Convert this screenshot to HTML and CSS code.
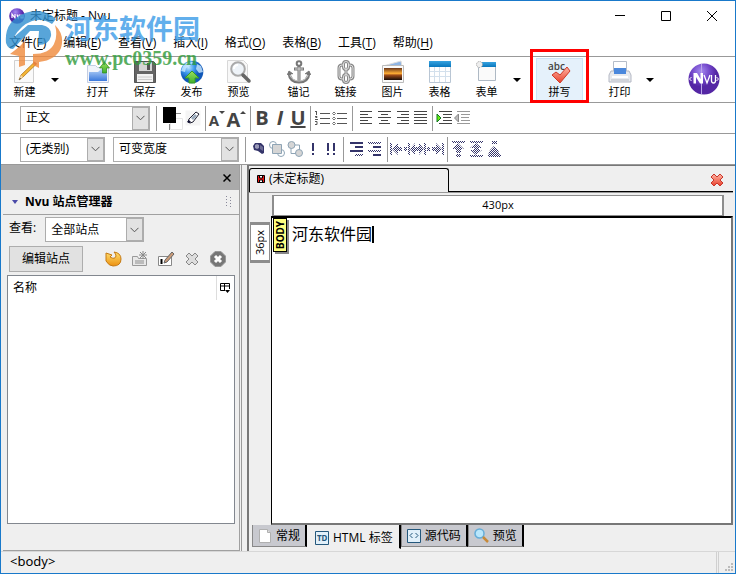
FILE: index.html
```html
<!DOCTYPE html>
<html lang="zh-CN">
<head>
<meta charset="utf-8">
<title>未定标题 - Nvu</title>
<link rel="stylesheet" href="styles.css">
</head>
<body>
<svg class="defs" width="0" height="0" aria-hidden="true">
  <defs>
    <pattern id="dots" width="2" height="2" patternUnits="userSpaceOnUse"><path fill="#34346a" d="M0 0h1v1H0zM1 1h1v1H1z"/></pattern>
    <linearGradient id="blue" x2="0" y2="1"><stop stop-color="#b8d4f8"/><stop offset="1" stop-color="#3a78dc"/></linearGradient>
    <linearGradient id="bar" x2="0" y2="1"><stop stop-color="#38a3e0"/><stop offset="1" stop-color="#0877bd"/></linearGradient>
    <linearGradient id="green" x2="0" y2="1"><stop stop-color="#9be05e"/><stop offset="1" stop-color="#3fb02c"/></linearGradient>
    <linearGradient id="sunset" x2="0" y2="1"><stop stop-color="#6a3518"/><stop offset=".45" stop-color="#ffae35"/><stop offset=".6" stop-color="#9c4a18"/><stop offset="1" stop-color="#180c08"/></linearGradient>
    <linearGradient id="red" x2="0" y2="1"><stop stop-color="#ffb5a5"/><stop offset="1" stop-color="#e8402c"/></linearGradient>
    <linearGradient id="gold" x2="0" y2="1"><stop stop-color="#ffe070"/><stop offset="1" stop-color="#ec9010"/></linearGradient>
    <radialGradient id="globe" cx=".35" cy=".3"><stop stop-color="#bde4ff"/><stop offset=".5" stop-color="#3f9bee"/><stop offset="1" stop-color="#1058b8"/></radialGradient>
    <radialGradient id="violet" cx=".4" cy=".25"><stop stop-color="#a58af0"/><stop offset=".6" stop-color="#7044c8"/><stop offset="1" stop-color="#5426a4"/></radialGradient>
    <symbol id="chev" viewBox="0 0 9 6"><path d="M.5.8l4 4 4-4" fill="none" stroke="#555"/></symbol>
  </defs>
</svg>

<div class="window">
  <header class="titlebar">
    <svg class="app-icon" viewBox="0 0 16 16"><circle cx="8" cy="8" r="7.8" fill="url(#violet)"/><path d="M3 10V6l3 4V6M8 6.500l1.200 3.500 1.300-3.500M12 6.500V10h2V6.500" fill="none" stroke="#fff" stroke-width="1.200"/></svg>
    <span class="caption">未定标题 - Nvu</span>
    <div class="win-buttons">
      <button aria-label="最小化"><svg width="10" height="10"><path d="M0 4.500h10" stroke="#000"/></svg></button>
      <button aria-label="最大化"><svg width="10" height="10"><path d="M.5.5h9v9h-9z" fill="none" stroke="#000"/></svg></button>
      <button aria-label="关闭"><svg width="10" height="10"><path d="M0 0l10 10M10 0L0 10" stroke="#000"/></svg></button>
    </div>
  </header>

  <nav class="menubar">
    <button>文件(<u>F</u>)</button>
    <button>编辑(<u>E</u>)</button>
    <button>查看(<u>V</u>)</button>
    <button>插入(<u>I</u>)</button>
    <button>格式(<u>O</u>)</button>
    <button>表格(<u>B</u>)</button>
    <button>工具(<u>T</u>)</button>
    <button>帮助(<u>H</u>)</button>
  </nav>

  <div class="toolbar">
    <button class="tool"><svg viewBox="0 0 24 24"><path d="M1.500.5h19v22h-19z" fill="#fafafa" stroke="#d0d0d0"/><path d="M21.500 2l2 2L10 17l-4 3 2-5z" fill="#f4b536" stroke="#a66b12" stroke-width=".7"/><path d="M6 20l2-5 2 2z" fill="#f1d8ae"/><path d="M6 20l1-2 1 .8z" fill="#222"/><path d="M20.500 3l2 2 1.200-1-2-2z" fill="#b55"/></svg>新建</button>
    <button class="drop" aria-label="新建选项"><i class="tri"></i></button>
    <button class="tool gap"><svg viewBox="0 0 24 24"><path d="M1.500 5.500h8l2 2h11v15h-21z" fill="#f1f4fb" stroke="#c3cde2"/><path d="M3 12h9l3-3h6v12H3z" fill="url(#blue)"/><path d="M18.500 2l5 6h-3v5h-4V8h-3z" fill="url(#green)" stroke="#2b8a1b" stroke-width=".7"/></svg>打开</button>
    <button class="tool"><svg viewBox="0 0 24 24"><path d="M1.500 1.500h19l2 2v19h-21z" fill="#656565" stroke="#555"/><path d="M6 2h13v9H6z" fill="#d5d5d5"/><path d="M14 3h3v7h-3z" fill="#555"/><path d="M4 14h16v8H4z" fill="#f3f3f3"/><path d="M5 17h14M5 19.500h14" stroke="#ccc"/></svg>保存</button>
    <button class="tool"><svg viewBox="0 0 24 24"><circle cx="12" cy="12" r="11.300" fill="url(#globe)"/><path d="M3 6q5-6 10-4l-3 4-4 2-1 4-4-1zM17 4l4 2 2 6-4 1-3-4z" fill="#cceaff" opacity=".8"/><path d="M12 11l7 7h-4v5H9v-5H5z" fill="url(#green)" stroke="#379a2a"/></svg>发布</button>
    <button class="tool"><svg viewBox="0 0 24 24"><path d="M.5.500h16l4 4v18H.5z" fill="#f8f8f8" stroke="#d8d8d8"/><circle cx="11" cy="9" r="6.800" fill="#eef3f8" stroke="#aaa" stroke-width="2"/><path d="M16 15l6 6" stroke="#666" stroke-width="3.500" stroke-linecap="round"/><path d="M7 9q0-4 4-4" fill="none" stroke="#fff" stroke-width="2"/></svg>预览</button>
    <button class="tool gap"><svg viewBox="0 0 24 24" fill="none" stroke="#777"><circle cx="12" cy="3.500" r="2.300" stroke-width="2"/><path d="M12 6v15M7 9h10" stroke-width="3"/><path d="M2 13q1 9 10 9t10-9" stroke-width="3"/><path d="M.5 15L2 11l4 3M23.500 15L22 11l-4 3" fill="#777"/><path d="M12 7v13M8 9h8M3 15q2 6 9 6t9-6" stroke="#d2d2d2"/></svg>锚记</button>
    <button class="tool"><svg viewBox="0 0 24 24" fill="none"><g stroke="#888" stroke-width="3"><path d="M9 19H8q-3 0-3-3V8q0-3 3-3h1M15 19h1q3 0 3-3V8q0-3-3-3h-1"/><rect x="9.500" y="1.500" width="5" height="8" rx="2.500"/><rect x="9.500" y="14.500" width="5" height="8" rx="2.500"/><path d="M12 8v8"/></g><g stroke="#ddd"><path d="M9 19H8q-3 0-3-3V8q0-3 3-3h1M15 19h1q3 0 3-3V8q0-3-3-3h-1"/><rect x="9.500" y="1.500" width="5" height="8" rx="2.500"/><rect x="9.500" y="14.500" width="5" height="8" rx="2.500"/><path d="M12 8v8"/></g></svg>链接</button>
    <button class="tool"><svg viewBox="0 0 24 24"><path d="M2 6l18-5 1 6H2z" fill="#8db4e4" stroke="#ddd"/><path d="M1.500 5.500h21v17h-21z" fill="#fafafa" stroke="#bbb"/><path d="M3 8h18v12H3z" fill="url(#sunset)"/></svg>图片</button>
    <button class="tool"><svg viewBox="0 0 24 24"><path d="M1.500 1.500h21v21h-21z" fill="#fff" stroke="#b9c6d4"/><path d="M1 1h22v6H1z" fill="url(#bar)"/><path d="M6.500 7v15M11.500 7v15M17.500 7v15M2 11.500h20M2 16.500h20" stroke="#d3e0ec"/></svg>表格</button>
    <button class="tool"><svg viewBox="0 0 24 24"><path d="M3.500 2.500h17v18h-17z" fill="#fafafa" stroke="#aeb9c4"/><path d="M3 2h18v5H3z" fill="url(#bar)"/><circle cx="4.500" cy="4.500" r="3" fill="#eee" stroke="#999" stroke-dasharray="1 1"/></svg>表单</button>
    <button class="drop" aria-label="表单选项"><i class="tri"></i></button>
    <div class="marked gap"><button class="tool hot"><svg viewBox="0 0 24 24"><text x="0" y="10" class="abc">abc</text><path d="M4 15l4-3 4 3 7-8 3 4-10 12z" fill="url(#red)" stroke="#cf3a28"/></svg>拼写</button></div>
    <button class="tool gap"><svg viewBox="0 0 24 24"><path d="M5.500 1.500h13v11h-13z" fill="#fff" stroke="#b5bdc9"/><path d="M3 11h18l2 4v7H1v-7z" fill="#e8eaee" stroke="#b4b8c4"/><path d="M6 8h12v6H6z" fill="#4b88dc"/><path d="M4 16h16v2H4z" fill="#fff"/><path d="M3 20h18" stroke="#b8bcc4"/></svg>打印</button>
    <button class="drop" aria-label="打印选项"><i class="tri"></i></button>
    <svg class="nvu-logo" viewBox="0 0 32 32"><circle cx="16" cy="16" r="15.500" fill="url(#violet)"/><path d="M13.500 1v30" stroke="#b9a3ea"/><path d="M3.500 14l-2 2 2 2M28.500 14l2 2-2 2" fill="none" stroke="#fff"/><path d="M5.500 20.500V10h3.500l3.500 6V10H15v10.500h-3l-4-6.500v6.500z" fill="#fff"/><path d="M16 12l3 8 3-8M23.500 12v5.500q0 2.500 2 2.500t2-2.500V12" fill="none" stroke="#fff" stroke-width="1.300"/></svg>
  </div>

  <div class="formatbar">
    <label class="combo para"><select aria-label="段落格式"><option>正文</option></select><span class="arrow"><svg><use href="#chev"/></svg></span></label>
    <div class="group">
      <button class="swatches" aria-label="文字和背景颜色"><svg width="22" height="24"><path d="M9.500 12.500h12v11h-12z" fill="#fff" stroke="#e6e6e6"/><path d="M15 7.500h5M8.500 18v6" stroke="#888"/><path d="M2 1h13v16H2z" fill="#000"/></svg></button>
      <button aria-label="高亮"><svg width="16" height="16"><path d="M.5.5h15v15H.5z" fill="#f5f5f5"/><path d="M3 12l1-3 7-7 3 2-6 8-3 1z" fill="#fff" stroke="#223"/><path d="M6 8l4-4 2 2-4 4z" fill="#9ab"/><path d="M2 12l2-2 2 2-2 1z" fill="#113"/></svg></button>
    </div>
    <div class="group">
      <button class="a-small" aria-label="缩小字号">A<i class="tri"></i></button>
      <button class="a-big" aria-label="放大字号">A<i class="tri up"></i></button>
    </div>
    <div class="group letters"><button><b>B</b></button><button><b><em>I</em></b></button><button><b class="under">U</b></button></div>
    <div class="group">
      <button aria-label="编号列表"><svg width="16" height="14"><path d="M2.500 0v4M1 .5h1M1 5.500h2v1H1.500M1 8.500h3M1 10.500h2v3H1" stroke="#555" fill="none"/><path d="M6 2.500h10M6 7.500h10M6 12.500h10" stroke="#555"/></svg></button>
      <button aria-label="项目列表"><svg width="16" height="14"><path d="M2 1l1.500 1.500L2 4 .5 2.500zM2 6l1.500 1.500L2 9 .5 7.500zM2 11l1.500 1.500L2 14 .5 12.500z" fill="none" stroke="#777"/><path d="M5 2.500h10M5 7.500h10M5 12.500h10" stroke="#555"/></svg></button>
    </div>
    <div class="group wide">
      <button aria-label="左对齐"><svg width="13" height="14"><path d="M0 .5h12M0 3.500h8M0 6.500h12M0 9.500h8M0 12.500h12" stroke="#444"/></svg></button>
      <button aria-label="居中"><svg width="13" height="14"><path d="M0 .5h13M3 3.500h7M0 6.500h13M3 9.500h7M1 12.500h11" stroke="#444"/></svg></button>
      <button aria-label="右对齐"><svg width="13" height="14"><path d="M1 .5h12M5 3.500h8M1 6.500h12M5 9.500h8M1 12.500h12" stroke="#444"/></svg></button>
      <button aria-label="两端对齐"><svg width="13" height="14"><path d="M0 .5h13M0 3.500h13M0 6.500h13M0 9.500h13M0 12.500h13" stroke="#444"/></svg></button>
    </div>
    <div class="group">
      <button aria-label="增加缩进"><svg width="16" height="14"><path d="M1 3l4 4-4 4z" fill="#6e1" stroke="#172"/><path d="M3 .5h13M7 3.500h9M7 6.500h8M7 9.500h9M3 12.500h13" stroke="#444"/></svg></button>
      <button aria-label="减少缩进"><svg width="16" height="14"><path d="M4.500 3l-4 4 4 4z" fill="#bbb" stroke="#888"/><path d="M3 .5h13M7 3.500h9M7 6.500h8M7 9.500h9M3 12.500h13" stroke="#999"/></svg></button>
    </div>
  </div>

  <div class="formatbar">
    <label class="combo cls"><select aria-label="类别"><option>(无类别)</option></select><span class="arrow"><svg><use href="#chev"/></svg></span></label>
    <label class="combo font"><select aria-label="字体"><option>可变宽度</option></select><span class="arrow"><svg><use href="#chev"/></svg></span></label>
    <div class="group wide">
      <button aria-label="层"><svg width="12" height="14"><path d="M2 1h6l3 3v7l-2 1-4-3-4-1-1-4z" fill="#34346a"/><path d="M2 3l2-1 2 1v3L4 7 2 6z" fill="#9a9ab8"/><path d="M7 3l3 2v4L7 7z" fill="#6c6c94"/></svg></button>
      <button aria-label="置前"><svg width="16" height="16"><circle cx="4" cy="4" r="3.500" fill="#fff" stroke="#8ea4b5"/><circle cx="12" cy="12" r="3.500" fill="#fff" stroke="#8ea4b5"/><path d="M3.500 3.500h9v9h-9z" fill="#d5d5d5" stroke="#8ea4b5"/></svg></button>
      <button aria-label="置后"><svg width="16" height="16"><path d="M4 4h8.500v8M4 4v8.500h8" fill="none" stroke="#8ea4b5"/><circle cx="4.500" cy="4" r="3.500" fill="#d5d5d5" stroke="#8ea4b5"/><circle cx="12" cy="12" r="3.500" fill="#d5d5d5" stroke="#8ea4b5"/></svg></button>
      <button aria-label="强调"><svg width="4" height="12"><path d="M1 0h2v8H1zM1 10h2v2H1z" fill="#34346a"/></svg></button>
      <button aria-label="着重强调"><svg width="10" height="12"><path d="M1 0h2v8H1zM1 10h2v2H1zM7 0h2v8H7zM7 10h2v2H7z" fill="#34346a"/></svg></button>
    </div>
    <div class="group wide">
      <button aria-label="术语"><svg width="14" height="14"><path d="M0 0h13v2H0zM5 4h8v2H5zM0 8h13v2H0z" fill="#34346a"/><path d="M5 12h8v2H5z" fill="url(#dots)"/></svg></button>
      <button aria-label="定义"><svg width="14" height="14"><path d="M5 4h8v2H5zM5 12h8v2H5z" fill="#34346a"/><path d="M0 0h13v2H0zM0 8h13v2H0z" fill="url(#dots)"/></svg></button>
    </div>
    <div class="group">
      <button aria-label="靠左"><svg width="18" height="12"><path d="M0 0h2v12H0zM2 6l6-6v4h4v4H8v4zM14 4h3v4h-3z" fill="url(#dots)"/></svg></button>
      <button aria-label="水平居中"><svg width="18" height="12"><path d="M0 0h2v12H0zM16 0h2v12h-2zM2 6l5-6v4h4V0l5 6-5 6V8H7v4z" fill="url(#dots)"/></svg></button>
      <button aria-label="靠右"><svg width="18" height="12"><path d="M16 0h2v12h-2zM16 6l-6-6v4H6v4h4v4zM1 4h3v4H1z" fill="url(#dots)"/></svg></button>
    </div>
    <div class="group">
      <button aria-label="靠上"><svg width="14" height="16"><path d="M0 0h13v2H0zM6 2l6 6H9v4H4V8H0zM4 13h5v3H4z" fill="url(#dots)"/></svg></button>
      <button aria-label="垂直居中"><svg width="14" height="16"><path d="M0 0h13v2H0zM0 14h13v2H0zM6 2l6 5H9v2h3l-6 5-6-5h4V7H0z" fill="url(#dots)"/></svg></button>
      <button aria-label="靠下"><svg width="14" height="16"><path d="M0 14h13v2H0zM6 5l4 4 2 5H0l2-5zM4 0h5v3H4z" fill="url(#dots)"/></svg></button>
    </div>
  </div>

  <main class="workspace">
    <aside class="sidebar">
      <div class="side-top"><button aria-label="关闭侧栏"><svg width="8" height="8"><path d="M.5.5l7 7M7.500.5l-7 7" stroke="#000" stroke-width="1.500"/></svg></button></div>
      <div class="side-panel">
        <div class="side-head"><svg width="8" height="5"><path d="M1 0h6L4 4z" fill="#4a4aa8"/></svg><h2>Nvu 站点管理器</h2><svg class="grip" width="5" height="12"><path d="M.5 0v12M4.500 1v11" stroke="#889" stroke-dasharray="1 2"/></svg></div>
        <div class="view-row"><label for="view">查看:</label><span class="combo sites"><select id="view"><option>全部站点</option></select><span class="arrow"><svg><use href="#chev"/></svg></span></span></div>
        <div class="site-tools">
          <button class="push">编辑站点</button>
          <button aria-label="刷新"><svg width="18" height="16"><path d="M1 2l6 2-2 2q5 3 6-1 0-2-2-4 7 1 7 7 0 7-8 7-4 0-7-5z" fill="url(#gold)" stroke="#c57a14"/></svg></button>
          <button aria-label="新建文件夹"><svg width="18" height="16"><path d="M1.500 5.500h5l1 2h8v7h-14z" fill="#e8e8e8" stroke="#999"/><path d="M4 9h9v4H4z" fill="#bbb"/><path d="M12 0v8M8 4h8M9 1l6 6M15 1L9 7" stroke="#888"/></svg></button>
          <button aria-label="重命名"><svg width="18" height="16"><path d="M1.500 5.500h13v9h-13z" fill="#fff" stroke="#888"/><path d="M4.500 8v5" stroke="#000" stroke-width="2"/><path d="M15 1l2 2-7 8-3 1 1-3z" fill="#c99a78" stroke="#666"/></svg></button>
          <button aria-label="删除"><svg width="14" height="14"><path d="M1 4l3-3 3 3 3-3 3 3-3 3 3 3-3 3-3-3-3 3-3-3 3-3z" fill="#ddd" stroke="#888"/></svg></button>
          <button aria-label="停止"><svg width="16" height="16"><path d="M5 .5h6L15.500 5v6L11 15.500H5L.5 11V5z" fill="#777" stroke="#999"/><path d="M5 5l6 6M11 5l-6 6" stroke="#fff" stroke-width="3"/></svg></button>
        </div>
        <div class="tree">
          <div class="tree-head"><span>名称</span><button aria-label="选择列"><svg width="11" height="10"><path d="M.5.5h9v7h-9zM.5 3h9M4.500 1v7" fill="none" stroke="#000"/><path d="M5 6h6v4H5z" fill="#fff"/><path d="M5 7h5L7.500 10z"/></svg></button></div>
        </div>
      </div>
    </aside>
    <div class="splitter"></div>
    <section class="editor">
      <div class="doc-tabs">
        <button class="doc-tab"><svg width="8" height="8"><path d="M.5.5h7v7h-7z" fill="#e11" stroke="#000"/><path d="M2.500 1v2h3V1M2.500 7V5h3v2" fill="#fff" stroke="#000"/></svg>(未定标题)</button>
        <button class="doc-close" aria-label="关闭标签页"><svg width="14" height="14"><path d="M1 4l3-3 3 3 3-3 3 3-3 3 3 3-3 3-3-3-3 3-3-3 3-3z" fill="url(#red)" stroke="#c8352a"/></svg></button>
      </div>
      <div class="edit-area">
        <div class="ruler-h"><span>430px</span></div>
        <div class="ruler-v"><span>36px</span></div>
        <div class="canvas"><span class="body-tag">BODY</span><p>河东软件园</p></div>
      </div>
      <div class="mode-tabs">
        <button><svg width="14" height="16"><path d="M1.500 1.500h8l3 3v10h-11z" fill="#fff" stroke="#b0b0b0"/><path d="M9.500 1.500v3h3" fill="#ddd" stroke="#b0b0b0"/></svg>常规</button>
        <button class="active"><svg width="14" height="14"><path d="M.5.5h13v13H.5z" fill="#e1f0fa" stroke="#24587c"/><text x="2" y="10" class="td">TD</text></svg>HTML 标签</button>
        <button><svg width="14" height="14"><path d="M.5.5h13v13H.5z" fill="#e1f0fa" stroke="#24587c"/><path d="M5.500 4L3 6.500 5.500 9M8.500 4L11 6.500 8.500 9" fill="none" stroke="#24587c"/></svg>源代码</button>
        <button><svg width="15" height="15"><circle cx="5.500" cy="5.500" r="4.500" fill="#b9e6fb" stroke="#65add8" stroke-width="1.500"/><path d="M9 9l5 5" stroke="#c78a3a" stroke-width="2.500"/></svg>预览</button>
      </div>
    </section>
  </main>

  <footer class="statusbar"><span>&lt;body&gt;</span><div class="status-end"><svg width="8" height="8"><path d="M6 0h2v2H6zM3 3h2v2H3zM6 3h2v2H6zM0 6h2v2H0zM3 6h2v2H3zM6 6h2v2H6z" fill="#bbb"/></svg></div></footer>

  <div class="watermark">
    <svg width="58" height="58" viewBox="0 0 58 58"><path d="M1 32Q-1 10 20 2q18-6 31 6l-4 5Q38 7 27 10 16 14 9 26l14-12h14q10 2 9 11-2 9-13 9l1-14h-9L8 38q-5 0-7-6z" fill="#2f8fd0"/><path d="M50 14q10 10 6 23-5 12-22 14v6l-6-3V43q16 0 21-10 4-8 1-19zM14 36l6-6v24l-6 2V45l-9-2z" fill="#f08a3c"/></svg>
    <div><strong>河东软件园</strong><em>www.pc0359.cn</em></div>
  </div>
</div>
</body>
</html>
```
FILE: styles.css
```css
* { box-sizing: border-box; }
body {
  margin: 0;
  font: 12px/16px "Open Sans", "Noto Sans CJK SC", sans-serif;
  color: #000;
}
button {
  margin: 0;
  padding: 0;
  border: 0;
  background: none;
  font: inherit;
  color: inherit;
}
svg { display: block; flex: none; }
.defs { position: absolute; }
.window {
  position: relative;
  display: flex;
  flex-direction: column;
  min-height: 100vh;
  border: 1px solid #1979ca;
  background: #fff;
}

.titlebar { display: flex; align-items: center; height: 29px; padding-left: 8px; }
.app-icon { width: 16px; height: 16px; }
.caption { flex: 1; padding-left: 5px; }
.win-buttons { display: flex; }
.win-buttons button { display: grid; place-items: center; width: 46px; height: 28px; }

.menubar { display: flex; gap: 17px; height: 26px; padding-left: 8px; }
.menubar u { text-underline-offset: 2px; }

.toolbar {
  display: flex;
  align-items: flex-start;
  height: 46px;
  border-top: 1px solid #999;
  padding-top: 1px;
}
.tool {
  display: flex;
  flex-direction: column;
  align-items: center;
  width: 47px;
  height: 44px;
  padding-top: 2px;
  font-size: 11px;
}
.tool svg { width: 24px; height: 24px; overflow: visible; }
.drop { display: grid; place-items: center; width: 13px; height: 44px; }
.gap { margin-left: 13px; }
.tri { border: solid transparent; border-width: 4px 4px 0; border-top-color: #000; }
.tri.up { border-width: 0 4px 4px; border-bottom-color: #444; }
.marked { position: relative; }
.marked::after {
  content: "";
  position: absolute;
  inset: -9px -6px -1px;
  border: 3px solid #f00;
}
.hot { background: #e5f1fb; box-shadow: inset 0 0 0 1px #cce4f7; }
.abc { font: 600 10px "Open Sans", sans-serif; fill: #444; }
.nvu-logo { width: 32px; height: 32px; margin: 5px 15px 0 auto; }

.formatbar {
  display: flex;
  align-items: center;
  height: 31px;
  padding-left: 19px;
  border-top: 1px solid #999;
}
.combo {
  position: relative;
  display: block;
  height: 25px;
  border: 1px solid #acacac;
  background: #fff;
}
.combo select {
  appearance: none;
  width: 100%;
  height: 100%;
  padding: 0 20px 0 5px;
  border: 0;
  background: none;
  font: inherit;
  color: inherit;
}
.arrow {
  position: absolute;
  inset: 0 0 0 auto;
  display: grid;
  place-items: center;
  width: 17px;
  border: 1px solid #adadad;
  background: #e2e2e2;
  pointer-events: none;
}
.arrow svg { width: 9px; height: 6px; }
.para { width: 130px; margin-right: 6px; }
.cls { width: 85px; margin-right: 8px; }
.font { width: 126px; margin-right: 6px; }
.sites { width: 99px; }
.group {
  display: flex;
  align-items: center;
  height: 25px;
  padding: 0 3px 0 2px;
  border-left: 1px solid #999;
}
.group.wide { padding-left: 4px; }
.group button { display: grid; place-items: center; width: 18px; height: 24px; }
.group .swatches { width: 25px; }
.group .a-small, .group .a-big {
  display: flex;
  align-items: flex-end;
  justify-content: center;
  font: bold 15px/20px "Open Sans", sans-serif;
  color: #444;
}
.group .a-big { width: 21px; font-size: 20px; }
.a-small .tri, .a-big .tri { align-self: flex-start; margin-top: 5px; }
.a-small .tri { border-width: 3px 3px 0; border-top-color: #444; }
.a-big .tri { border-width: 0 3px 3px; }
.letters { font: 20px/24px "Open Sans", sans-serif; color: #444; }
.under { text-decoration: underline; text-decoration-thickness: 2px; }

.workspace { flex: 1; display: flex; border-top: 1px solid #999; background: #efefef; }
.sidebar { display: flex; flex-direction: column; width: 239px; border-right: 1px solid #a0a0a0; }
.side-top { height: 25px; background: #aaa; }
.side-top button { display: grid; place-items: center; width: 24px; height: 25px; margin-left: auto; }
.side-panel {
  flex: 1;
  display: flex;
  flex-direction: column;
  margin-left: 2px;
  border-bottom: 1px solid #a0a0a0;
}
.side-head {
  display: flex;
  align-items: center;
  height: 25px;
  padding: 0 8px;
  border-bottom: 1px solid #a0a0a0;
}
.side-head h2 { margin: 0 auto 0 6px; font-size: 12px; }
.view-row { display: flex; gap: 9px; padding: 2px 6px 4px; }
.view-row label { line-height: 22px; }
.site-tools { display: flex; align-items: center; padding: 0 6px 3px; }
.site-tools button { display: grid; place-items: center; width: 26px; height: 26px; }
.site-tools .push { width: 74px; margin-right: 18px; border: 1px solid #adadad; background: #e1e1e1; }
.tree { flex: 1; margin: 0 4px 26px; border: 1px solid #82878f; background: #fff; }
.tree-head { display: flex; justify-content: space-between; height: 24px; line-height: 24px; padding-left: 5px; }
.tree-head button { display: grid; place-items: center; width: 18px; border-left: 1px solid #ddd; }

.splitter {
  width: 8px;
  border: solid #999;
  border-width: 0 2px 0 1px;
  border-right-color: #777;
  margin-left: 1px;
}
.editor { flex: 1; display: flex; flex-direction: column; padding-right: 2px; border-top: 1px solid #777; }
.doc-tabs { display: flex; justify-content: space-between; height: 26px; padding-top: 2px; }
.doc-tabs::before { content: ""; order: 1; flex: 1; border-bottom: 1px solid #000; }
.doc-tab {
  display: flex;
  align-items: center;
  gap: 4px;
  width: 200px;
  padding: 0 0 3px 7px;
  border: 1px solid #000;
  border-bottom: 0;
  border-radius: 3px 3px 0 0;
}
.doc-close { order: 2; display: grid; place-items: center; width: 32px; border-bottom: 1px solid #000; }
.edit-area {
  flex: 1;
  display: grid;
  grid-template-columns: 22px 1fr;
  grid-template-rows: 23px 1fr;
  border-top: 1px solid #999;
}
.ruler-h {
  grid-column: 2;
  margin: 2px 9px 0 1px;
  border: solid #8d8d8d;
  border-width: 1px 2px;
  background: #fff;
  font-size: 11px;
  line-height: 18px;
  text-align: center;
}
.ruler-v {
  display: grid;
  place-items: center;
  width: 20px;
  height: 41px;
  margin: 6px 0 0 1px;
  border: solid #8d8d8d;
  border-width: 3px 1px;
  background: #fff;
  font-size: 11px;
}
.ruler-v span, .body-tag { writing-mode: vertical-rl; transform: rotate(180deg); }
.canvas {
  display: flex;
  align-items: flex-start;
  gap: 5px;
  border: 2px solid #777;
  border-top-color: #000;
  border-left: 1px solid #000;
  background: #fff;
}
.body-tag {
  width: 14px;
  height: 34px;
  margin-left: 1px;
  border: 1px solid #000;
  background: #ffff80;
  box-shadow: -2px -2px 0 #888;
  font: bold 10px/12px "Noto Sans", sans-serif;
  text-align: center;
}
.canvas p { margin: 8px 0 0; border-right: 2px solid #000; font-size: 16px; line-height: 17px; }
.mode-tabs { display: flex; align-items: flex-start; height: 26px; padding-left: 3px; }
.mode-tabs button {
  display: flex;
  align-items: center;
  gap: 4px;
  height: 22px;
  padding: 0 5px;
  border: solid #888;
  border-width: 0 2px 1px 1px;
  border-right-color: #000;
  background: #c8c9cf;
}
.mode-tabs .active { height: 24px; padding: 2px 6px 0 7px; background: #efefef; border-color: #efefef #000 #efefef #efefef; }
.td { font: bold 8px "Noto Sans", sans-serif; fill: #24587c; }

.statusbar {
  display: flex;
  justify-content: space-between;
  height: 22px;
  padding-left: 9px;
  border-top: 1px solid #d7d7d7;
  background: #efefef;
  font: 13px/18px "Noto Sans", sans-serif;
}
.status-end {
  display: grid;
  place-items: end;
  width: 19px;
  padding: 0 2px 2px 0;
  border-left: 3px double #d0d0d0;
}

.watermark {
  position: absolute;
  top: 10px;
  left: 4px;
  display: flex;
  gap: 2px;
  opacity: .8;
  pointer-events: none;
}
.watermark div { display: grid; }
.watermark strong { color: #3b9ce8; font-size: 27px; line-height: 36px; }
.watermark em { color: #2f9b3a; font: bold 20px/22px "Liberation Serif", serif; }
```
